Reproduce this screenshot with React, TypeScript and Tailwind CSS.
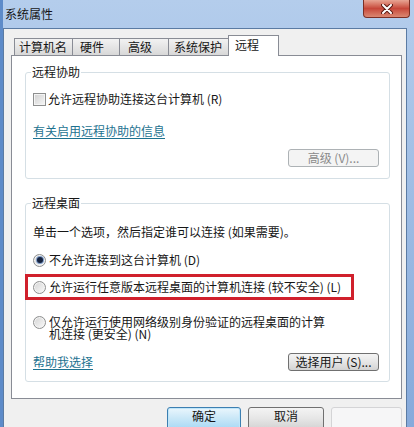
import React from 'react';

const tabs = [
  { label: '计算机名', cls: 'w-[59px] pl-[4px]' },
  { label: '硬件', cls: 'w-[48px] pl-[7px]' },
  { label: '高级', cls: 'w-[50px] pl-[8px]' },
  { label: '系统保护', cls: 'w-[61px] pl-[5px]' },
];

const Radio: React.FC<{ checked?: boolean }> = ({ checked }) => (
  <span className="w-[13px] h-[13px] shrink-0 rounded-full border border-[#8e8f8f] bg-gradient-to-br from-[#d4d4d4] to-[#fafafa] shadow-[inset_0_0_0_1px_#f4f4f4] flex items-center justify-center">
    {checked && (
      <span className="w-[6px] h-[6px] rounded-full bg-[#16233f] shadow-[0_0_0_1px_#7d9cc8]" />
    )}
  </span>
);

const Checkbox: React.FC = () => (
  <span className="w-[13px] h-[13px] shrink-0 border border-[#8e8f8f] bg-gradient-to-br from-[#d0d0d0] to-[#f7f7f7] shadow-[inset_0_0_0_1px_#f4f4f4]" />
);

const App: React.FC = () => {
  return (
    <div className="w-[414px] h-[427px] overflow-hidden flex flex-col border-l-[3px] border-l-[#5d8bc9] bg-gradient-to-b from-[#b4cdec] to-[#86aadb] font-['Noto_Sans_CJK_SC','Noto_Sans',sans-serif] text-[12px] text-[#161616]">
      {/* Title bar */}
      <div className="h-[28px] shrink-0 flex items-start justify-between">
        <span className="ml-[2px] mt-[7px] leading-[14px]">系统属性</span>
        <div className="mr-[4px] w-[47px] h-[18px] rounded-b-[4px] border border-t-0 border-[#7b2f25] bg-gradient-to-b from-[#e7a594] via-[#c6473a] to-[#da8772] flex items-center justify-center">
          <svg width="12" height="10" viewBox="0 0 12 10">
            <path d="M2 1 L10 9 M10 1 L2 9" stroke="#5b1a12" strokeWidth="4" strokeLinecap="round" />
            <path d="M2 1 L10 9 M10 1 L2 9" stroke="#ffffff" strokeWidth="2" strokeLinecap="round" />
          </svg>
        </div>
      </div>

      {/* Client area */}
      <div className="flex-1 mr-[7px] bg-[#f0f0f0] border-l border-t border-r border-[#5b7ba3] flex flex-col">
        {/* Tabs */}
        <div className="ml-[10px] mt-[6px] h-[20px] flex items-end">
          {tabs.map((t, i) => (
            <div
              key={t.label}
              className={`${t.cls} ${i > 0 ? '-ml-px' : ''} h-[17px] border border-b-0 border-[#898c95] bg-gradient-to-b from-[#f2f2f2] to-[#d8d8d8] leading-[16px]`}
            >
              {t.label}
            </div>
          ))}
          <div className="-ml-px w-[51px] h-[21px] -mb-px relative border border-b-0 border-[#898c95] bg-white pl-[6px] leading-[18px]">
            远程
          </div>
        </div>

        {/* Tab panel */}
        <div className="ml-[7px] w-[391px] h-[344px] shrink-0 border border-[#898c95] bg-white flex flex-col">
          {/* 远程协助 */}
          <div className="ml-[13px] mt-[16px] w-[365px] h-[107px] shrink-0 border border-[#d5dfe5] rounded-[3px] pl-[7px] flex flex-col">
            <span className="-mt-[8px] -ml-[2px] self-start bg-white px-px leading-[14px]">远程协助</span>
            <label className="mt-[13px] h-[14px] flex items-center gap-[2px]">
              <Checkbox />
              <span className="leading-[14px]">允许远程协助连接这台计算机 (R)</span>
            </label>
            <a className="mt-[18px] self-start leading-[14px] text-[#1d7290] underline underline-offset-2">
              有关启用远程协助的信息
            </a>
            <div className="mt-[11px] mr-[10px] self-end w-[91px] h-[18px] rounded-[3px] border border-[#adb2b5] bg-[#f4f4f4] text-[#8a8a8a] flex items-center justify-center leading-[14px]">
              高级 (V)...
            </div>
          </div>

          {/* 远程桌面 */}
          <div className="ml-[13px] mt-[24px] w-[365px] h-[179px] shrink-0 border border-[#d5dfe5] rounded-[3px] pl-[7px] flex flex-col">
            <span className="-mt-[8px] -ml-[2px] self-start bg-white px-px leading-[14px]">远程桌面</span>
            <p className="mt-[15px] leading-[14px]">单击一个选项，然后指定谁可以连接 (如果需要)。</p>
            <label className="mt-[14px] h-[14px] flex items-center gap-[3px]">
              <Radio checked />
              <span className="leading-[14px]">不允许连接到这台计算机 (D)</span>
            </label>
            <label className="mt-[7px] -ml-[8px] w-[329px] h-[26px] border-[3px] border-[#d0202c] pl-[5px] flex items-center gap-[3px]">
              <Radio />
              <span className="leading-[14px]">允许运行任意版本远程桌面的计算机连接 (较不安全) (L)</span>
            </label>
            <label className="mt-[16px] flex items-start gap-[3px]">
              <Radio />
              <span className="w-[282px] leading-[12px]">
                仅允许运行使用网络级别身份验证的远程桌面的计算机连接 (更安全) (N)
              </span>
            </label>
            <div className="mt-[13px] mr-[10px] h-[18px] flex items-center justify-between">
              <a className="leading-[14px] text-[#1d7290] underline underline-offset-2">帮助我选择</a>
              <div className="w-[91px] h-[18px] rounded-[3px] border border-[#707070] bg-gradient-to-b from-[#f4f4f4] via-[#e6e6e6] to-[#d3d3d3] flex items-center justify-center leading-[14px]">
                选择用户 (S)...
              </div>
            </div>
          </div>
        </div>

        {/* Dialog buttons */}
        <div className="mt-[8px] pr-[4px] flex justify-end gap-[7px]">
          <div className="w-[74px] h-[23px] rounded-[3px] border border-[#3c7fb1] bg-gradient-to-b from-[#eaf6fd] via-[#c9e7f7] to-[#a7d9f5] shadow-[inset_0_0_0_1px_#bfe6fa] flex justify-center pt-[1px] leading-[14px]">
            确定
          </div>
          <div className="w-[76px] h-[23px] rounded-[3px] border border-[#707070] bg-gradient-to-b from-[#f4f4f4] via-[#e6e6e6] to-[#d3d3d3] flex justify-center pt-[1px] leading-[14px]">
            取消
          </div>
          <div className="w-[71px] h-[23px] rounded-[3px] border border-[#d4d4d6] bg-[#f6f6f7]" />
        </div>
      </div>
    </div>
  );
};

export default App;
